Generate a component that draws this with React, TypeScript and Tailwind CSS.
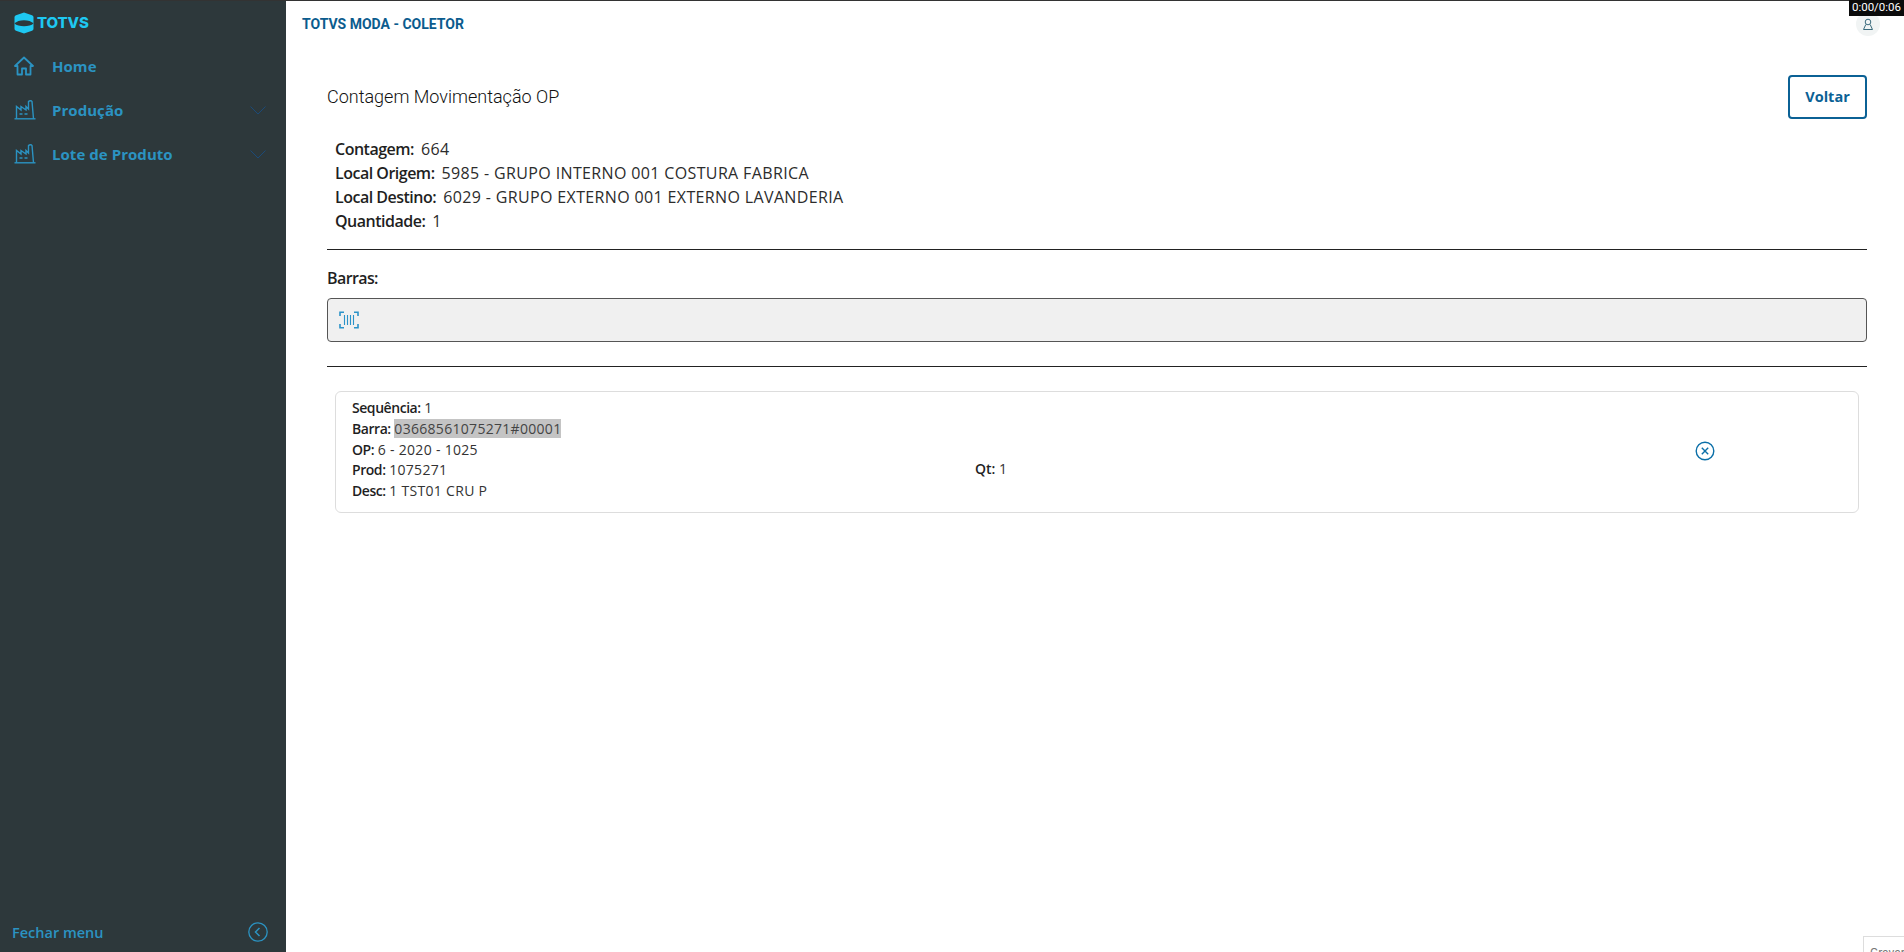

import React from "react";

const Factory = () => (
  <svg width="22" height="20" viewBox="0 0 22 20" fill="none" stroke="#2b93c2" strokeWidth="1.4" className="block">
    <path d="M0.5 18.8H21.5" />
    <path d="M2.5 18.8V6.5L7 10V6.5L12 10V6.5L14.5 9V1.5C15.5 0.5 17.5 0.5 18 1.5L19.5 18.8" />
    <path d="M5.5 14H8.5M10.5 14H13.5" />
  </svg>
);

const Chevron = () => (
  <svg width="16" height="9" viewBox="0 0 16 9" fill="none" stroke="#1b4a78" strokeWidth="1" className="block">
    <path d="M0.5 0.5L8 8L15.5 0.5" />
  </svg>
);

function NavItem({ icon, label, chevron }: { icon: React.ReactNode; label: string; chevron?: boolean }) {
  return (
    <div className="flex h-[44px] items-center pl-[14px] pr-[20px]">
      <div className="flex w-[38px] shrink-0 items-center">{icon}</div>
      <span className="flex-1 text-[15px] font-bold tracking-[0.05px] text-[#2b93c2]">{label}</span>
      {chevron && <Chevron />}
    </div>
  );
}

function Info({ k, v }: { k: string; v: string }) {
  return (
    <div className="h-[24px] text-[16px] leading-[24px] text-[#2c2c2c]">
      <span className="font-semibold tracking-[-0.5px] text-[#1f1f1f]">{k}:</span>
      <span className="ml-[7px] tracking-[0.36px]">{v}</span>
    </div>
  );
}

function Row({ k, children }: { k: string; children: React.ReactNode }) {
  return (
    <div className="h-[20.8px] text-[14px] leading-[20.8px] text-[#333]">
      <span className="font-semibold tracking-[-0.45px] text-[#1f1f1f]">{k}:</span>{" "}
      <span className="tracking-[0.3px]">{children}</span>
    </div>
  );
}

export default function App() {
  return (
    <div className="relative flex h-[952px] w-[1904px] overflow-hidden bg-white font-['Open_Sans',sans-serif]">
      <aside className="flex h-full w-[286px] shrink-0 flex-col border-t border-[#333] bg-[#2d383b]">
        <div className="flex h-[43px] items-center gap-[3px] pl-[14px]">
          <svg width="20" height="22" viewBox="0 0 20 22" className="block">
            <path d="M10 0.5L18 3.2C19.2 3.7 19.5 4.5 19.5 5.5V16.5C19.5 17.5 19.2 18.3 18 18.8L10 21.5L2 18.8C0.8 18.3 0.5 17.5 0.5 16.5V5.5C0.5 4.5 0.8 3.7 2 3.2Z" fill="#1ec8f2" />
            <path d="M0.5 11.5C4 7 16 7 19.5 11.5C16 15 4 15 0.5 11.5Z" fill="#2d383b" />
          </svg>
          <span className="font-['Inter',sans-serif] text-[15px] font-extrabold leading-none tracking-[-0.1px] text-[#1ec8f2]">TOTVS</span>
        </div>
        <nav>
          <NavItem
            label="Home"
            icon={
              <svg width="20" height="20" viewBox="0 0 20 20" fill="none" stroke="#2b93c2" strokeWidth="1.8" className="block">
                <path d="M1 10L10 1.5L19 10H16.5V18.5H12V12.5H8V18.5H3.5V10Z" strokeLinejoin="round" />
              </svg>
            }
          />
          <NavItem label="Produção" chevron icon={<Factory />} />
          <NavItem label="Lote de Produto" chevron icon={<Factory />} />
        </nav>
        <div className="mt-auto flex h-[40px] items-center pl-[12px] pr-[18px]">
          <span className="flex-1 pt-[1px] text-[14.5px] font-semibold text-[#2b93c2]">Fechar menu</span>
          <svg width="20" height="20" viewBox="0 0 20 20" fill="none" stroke="#2b93c2" strokeWidth="1.3" className="block">
            <circle cx="10" cy="10" r="9.2" />
            <path d="M11.5 6L7.5 10L11.5 14" strokeWidth="1.5" />
          </svg>
        </div>
      </aside>

      <main className="flex min-w-0 flex-1 flex-col border-t border-[#333]">
        <header className="flex h-[47px] items-center justify-between pl-[16px] pr-[24px]">
          <span className="font-['Roboto',sans-serif] text-[14px] font-bold text-[#0b5c8e]">TOTVS MODA - COLETOR</span>
          <div className="mb-[2px] flex h-[24px] w-[24px] items-center justify-center rounded-full bg-[#f1f4f4]">
            <svg width="12" height="12" viewBox="0 0 12 12" fill="none" stroke="#3a6a7c" strokeWidth="1" className="block">
              <circle cx="6" cy="4" r="2.8" />
              <path d="M3.8 6.5L1.5 11.5H10.5L8.2 6.5" />
            </svg>
          </div>
        </header>

        <div className="flex flex-col pl-[41px] pr-[37px]">
          <div className="mt-[27px] flex h-[44px] items-center justify-between">
            <h1 className="pb-[1px] font-['Roboto',sans-serif] text-[18px] font-light text-[#111]">Contagem Movimentação OP</h1>
            <button className="h-[44px] w-[79px] rounded-[4px] border-2 border-[#0b6195] text-[14.5px] font-bold text-[#0b6195]">Voltar</button>
          </div>

          <div className="mt-[18px] pl-[8px]">
            <Info k="Contagem" v="664" />
            <Info k="Local Origem" v="5985 - GRUPO INTERNO 001 COSTURA FABRICA" />
            <Info k="Local Destino" v="6029 - GRUPO EXTERNO 001 EXTERNO LAVANDERIA" />
            <Info k="Quantidade" v="1" />
          </div>

          <div className="mt-[16px] h-px bg-[#222]" />

          <label className="mt-[16px] h-[24px] text-[16px] font-semibold leading-[24px] tracking-[-0.6px] text-[#1f1f1f]">Barras:</label>

          <div className="mt-[8px] flex h-[44px] items-center rounded-[4px] border border-[#555] bg-[#f0f0f0] pl-[11px]">
            <svg width="20" height="18" viewBox="0 0 20 18" fill="none" stroke="#2b93c9" className="block">
              <path d="M5 1.2H1V5M15 1.2H19V5M1 13V16.8H5M19 13V16.8H15" strokeWidth="1.6" />
              <path d="M5.5 4V14M8.5 4V14M11.5 4V14M14.5 4V14" strokeWidth="1.1" />
            </svg>
          </div>

          <div className="mt-[24px] h-px bg-[#222]" />

          <div className="mx-[8px] mt-[24px] flex h-[122px] items-center rounded-[6px] border border-[#ddd] pb-[4px] pl-[16px]">
            <div className="w-[623px] shrink-0">
              <Row k="Sequência">1</Row>
              <Row k="Barra">
                <span className="bg-[#c4c4c4] text-[#444]">03668561075271#00001</span>
              </Row>
              <Row k="OP">6 - 2020 - 1025</Row>
              <Row k="Prod">1075271</Row>
              <Row k="Desc">1 TST01 CRU P</Row>
            </div>
            <div className="w-[720px] shrink-0 self-center pt-[36px] text-[14px]">
              <span className="font-semibold text-[#1f1f1f]">Qt:</span> <span className="text-[#333]">1</span>
            </div>
            <svg width="20" height="20" viewBox="0 0 20 20" fill="none" stroke="#0b6fa8" strokeWidth="1.4" className="mt-[2px] block">
              <circle cx="10" cy="10" r="8.8" />
              <path d="M6.8 6.8L13.2 13.2M13.2 6.8L6.8 13.2" />
            </svg>
          </div>
        </div>
      </main>

      <div className="absolute right-0 top-0 flex h-[16px] w-[55px] items-center justify-center bg-[#0b0b0b] font-['Roboto',sans-serif] text-[11.5px] text-white">0:00/0:06</div>
      <div className="absolute bottom-0 right-0 h-[16px] w-[41px] overflow-hidden border-l border-t border-[#ddd] bg-white pl-[6px] pt-[9px] font-['Roboto',sans-serif] text-[12px] leading-[14px] text-[#777]">Gravar</div>
    </div>
  );
}
